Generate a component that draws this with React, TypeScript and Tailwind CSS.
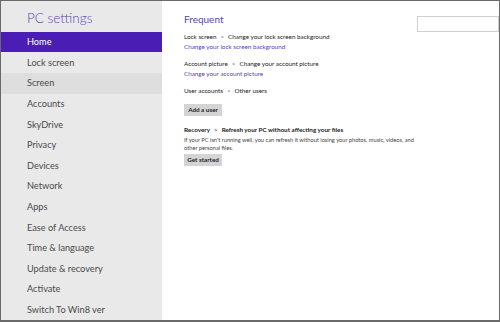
const navItems = [
  'Home',
  'Lock screen',
  'Screen',
  'Accounts',
  'SkyDrive',
  'Privacy',
  'Devices',
  'Network',
  'Apps',
  'Ease of Access',
  'Time & language',
  'Update & recovery',
  'Activate',
  'Switch To Win8 ver',
];

function Crumb({ a, b, bold }: { a: string; b: string; bold?: boolean }) {
  return (
    <div className={`text-[6.3px] leading-[8px] text-[#222] ${bold ? 'font-bold' : ''}`}>
      {a}
      <span className="mx-[4px] text-[#666]">&gt;</span>
      {b}
    </div>
  );
}

function Btn({ label }: { label: string }) {
  return (
    <div className="flex h-[12px] w-[38px] items-center justify-center bg-[#d4d4d4] text-[6.3px] font-bold text-[#222]">
      {label}
    </div>
  );
}

export default function App() {
  return (
    <div
      className="flex h-[322px] w-[500px] overflow-hidden border-t border-l border-r border-b-2 border-[#6a6a6a] bg-white"
      style={{ fontFamily: 'Lato, "Open Sans", sans-serif' }}
    >
      <aside className="flex w-[161px] shrink-0 flex-col bg-[#e9e9e9]">
        <div className="h-[31px] pl-[26px] pt-[7px] text-[13.5px] leading-[20px] font-light text-[#5b45a8]">
          PC settings
        </div>
        {navItems.map((item, i) => (
          <div
            key={item}
            className={`flex h-[20.8px] items-center pl-[26px] text-[9.2px] ${
              i === 0
                ? 'bg-[#4a1db5] text-white'
                : i === 2
                  ? 'bg-[#dedede] text-[#4a4a4a]'
                  : 'text-[#4a4a4a]'
            }`}
          >
            {item}
          </div>
        ))}
      </aside>

      <main className="flex min-w-0 flex-1 pl-[22px] pt-[11px]">
        <div className="flex min-w-0 flex-1 flex-col">
          <div className="text-[10px] leading-[14px] text-[#5b45a8]">Frequent</div>

          <div className="mt-[7px]">
            <Crumb a="Lock screen" b="Change your lock screen background" />
            <div className="mt-[2px] text-[6.3px] leading-[8px] text-[#5a3fc0]">
              Change your lock screen background
            </div>
          </div>

          <div className="mt-[9px]">
            <Crumb a="Account picture" b="Change your account picture" />
            <div className="mt-[2px] text-[6.3px] leading-[8px] text-[#5a3fc0]">
              Change your account picture
            </div>
          </div>

          <div className="mt-[9px]">
            <Crumb a="User accounts" b="Other users" />
          </div>

          <div className="mt-[9px]">
            <Btn label="Add a user" />
          </div>

          <div className="mt-[10px]">
            <Crumb a="Recovery" b="Refresh your PC without affecting your files" bold />
            <div className="mt-[2px] w-[232px] text-[5.7px] leading-[8px] text-[#444]">
              If your PC isn&apos;t running well, you can refresh it without losing your photos, music, videos, and other personal files.
            </div>
            <div className="mt-[2px]">
              <Btn label="Get started" />
            </div>
          </div>
        </div>

        <div className="shrink-0 pt-[4px]">
          <div className="h-[16px] w-[82px] border border-[#cfcfcf] bg-white" />
        </div>
      </main>
    </div>
  );
}
